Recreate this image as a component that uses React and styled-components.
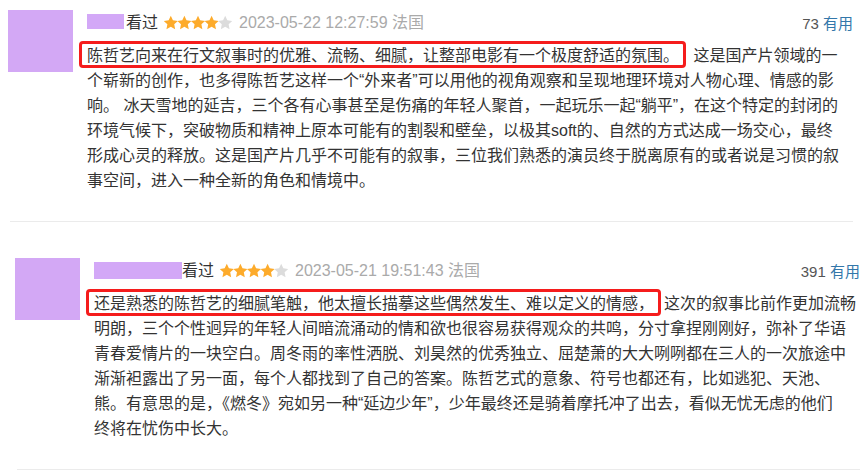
import React from "react";
import styled, { createGlobalStyle } from "styled-components";

const GlobalStyle = createGlobalStyle`
  html, body { margin: 0; padding: 0; background: #fff; }
  body {
    font-family: "Liberation Sans", "Noto Sans CJK SC", sans-serif;
    color: #333;
  }
`;

const List = styled.main`
  padding-top: 10px;
  width: 868px;
`;

const Card = styled.article`
  width: 845px;
  margin-left: ${(p) => 8 + (p.$shift || 0)}px;
`;

const Row = styled.div`
  display: flex;
  align-items: flex-start;
  gap: 14px;
`;

const Avatar = styled.div`
  flex: 0 0 65px;
  height: 62px;
  background: #d3a8f5;
`;

const Content = styled.div`
  flex: 1;
  min-width: 0;
`;

const Header = styled.div`
  display: flex;
  align-items: center;
  height: 25px;
  font-size: 16px;
  line-height: 25px;
`;

const NameMask = styled.span`
  display: inline-block;
  width: ${(p) => p.$w}px;
  height: ${(p) => p.$h}px;
  background: #d3a8f7;
  margin-right: ${(p) => p.$gap}px;
  margin-top: ${(p) => p.$dy || 0}px;
`;

const Watched = styled.span`
  color: #333;
`;

const Stars = styled.svg`
  margin: 0 7px 0 6px;
  flex: 0 0 auto;
`;

const Meta = styled.span`
  color: #aaa;
`;

const Votes = styled.span`
  margin-left: auto;
  font-size: 15px;
  color: #555;
  margin-top: 2px;
`;

const Useful = styled.span`
  color: #3377aa;
`;

const Text = styled.p`
  margin: 8px 0 0;
  font-size: 16px;
  line-height: 25px;
  white-space: nowrap;
  color: #333;
`;

const Mark = styled.span`
  position: relative;
  margin-right: 10px;
  &::after {
    content: "";
    position: absolute;
    left: -8px;
    right: -7px;
    top: -6px;
    bottom: -4px;
    border: 3px solid #f51c1c;
    border-radius: 4px;
    box-sizing: border-box;
    pointer-events: none;
  }
`;

const Divider = styled.hr`
  border: 0;
  height: 1px;
  background: #ebebeb;
  margin: 28px 0 ${(p) => (p.$last ? 0 : 36)}px 2px;
  width: 843px;
`;

const starPoints = (cx, cy, R, r) => {
  const pts = [];
  for (let i = 0; i < 10; i++) {
    const a = -Math.PI / 2 + (i * Math.PI) / 5;
    const rad = i % 2 === 0 ? R : r;
    pts.push(`${(cx + rad * Math.cos(a)).toFixed(2)},${(cy + rad * Math.sin(a)).toFixed(2)}`);
  }
  return pts.join(" ");
};

function Rating({ value }) {
  return (
    <Stars width="68" height="15" viewBox="0 0 68 15" aria-label={`${value} stars`}>
      {[0, 1, 2, 3, 4].map((i) => (
        <polygon
          key={i}
          points={starPoints(6.8 + i * 13.6, 8.2, 7.4, 3.6)}
          fill={i < value ? "#fdab2b" : "#dcdcdc"}
        />
      ))}
    </Stars>
  );
}

function Review({ shift, mask, date, votes, lines, last }) {
  return (
    <Card $shift={shift}>
      <Row>
        <Avatar />
        <Content>
          <Header>
            <NameMask $w={mask.w} $h={mask.h} $gap={mask.gap} $dy={mask.dy} />
            <Watched>看过</Watched>
            <Rating value={4} />
            <Meta>{date} 法国</Meta>
            <Votes>
              {votes} <Useful>有用</Useful>
            </Votes>
          </Header>
          <Text>{lines}</Text>
        </Content>
      </Row>
      <Divider $last={last} />
    </Card>
  );
}

export default function App() {
  return (
    <>
      <GlobalStyle />
      <List>
        <Review
          shift={0}
          mask={{ w: 37, h: 15, gap: 2, dy: -2 }}
          date="2023-05-22 12:27:59"
          votes="73"
          lines={
            <>
              <Mark>陈哲艺向来在行文叙事时的优雅、流畅、细腻，让整部电影有一个极度舒适的氛围。</Mark> 这是国产片领域的一
              <br />
              个崭新的创作，也多得陈哲艺这样一个“外来者”可以用他的视角观察和呈现地理环境对人物心理、情感的影
              <br />
              响。 冰天雪地的延吉，三个各有心事甚至是伤痛的年轻人聚首，一起玩乐一起“躺平”，在这个特定的封闭的
              <br />
              环境气候下，突破物质和精神上原本可能有的割裂和壁垒，以极其soft的、自然的方式达成一场交心，最终
              <br />
              形成心灵的释放。这是国产片几乎不可能有的叙事，三位我们熟悉的演员终于脱离原有的或者说是习惯的叙
              <br />
              事空间，进入一种全新的角色和情境中。
            </>
          }
        />
        <Review
          shift={7}
          mask={{ w: 88, h: 17, gap: 0, dy: 0 }}
          date="2023-05-21 19:51:43"
          votes="391"
          last
          lines={
            <>
              <Mark>还是熟悉的陈哲艺的细腻笔触，他太擅长描摹这些偶然发生、难以定义的情感，</Mark>这次的叙事比前作更加流畅
              <br />
              明朗，三个个性迥异的年轻人间暗流涌动的情和欲也很容易获得观众的共鸣，分寸拿捏刚刚好，弥补了华语
              <br />
              青春爱情片的一块空白。周冬雨的率性洒脱、刘昊然的优秀独立、屈楚萧的大大咧咧都在三人的一次旅途中
              <br />
              渐渐袒露出了另一面，每个人都找到了自己的答案。陈哲艺式的意象、符号也都还有，比如逃犯、天池、
              <br />
              熊。有意思的是，《燃冬》宛如另一种“延边少年”，少年最终还是骑着摩托冲了出去，看似无忧无虑的他们
              <br />
              终将在忧伤中长大。
            </>
          }
        />
      </List>
    </>
  );
}
